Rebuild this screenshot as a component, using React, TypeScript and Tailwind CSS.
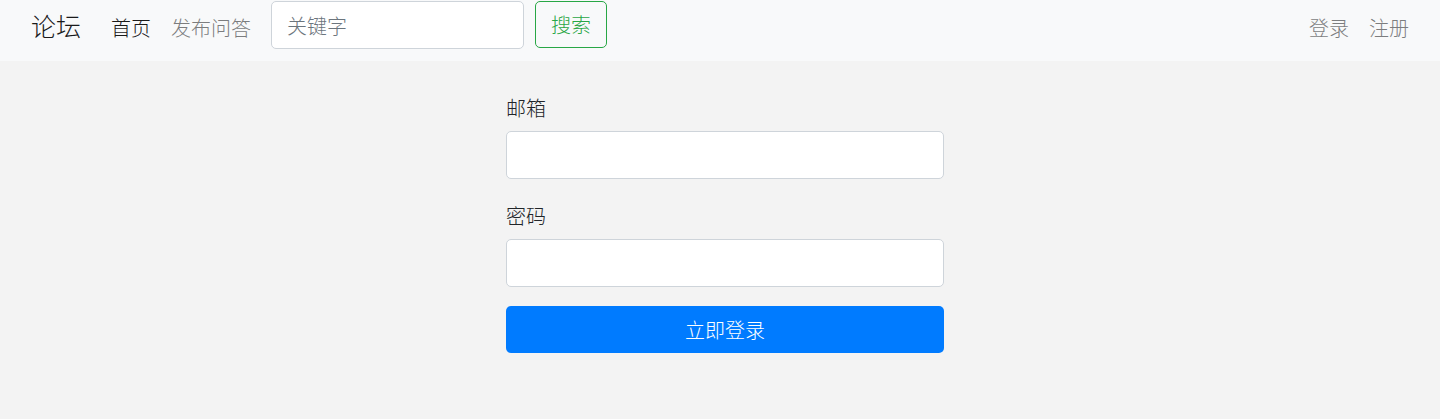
import React, { useState } from 'react';

const font = "font-['Noto_Sans_CJK_SC','Noto_Sans',sans-serif] font-light";

function NavBar() {
  const [keyword, setKeyword] = useState('');

  return (
    <nav className="flex items-start h-[61px] bg-[#f8f9fa] pl-[31px] pr-[21px]">
      <a href="#" className="mt-[13px] mr-[20px] text-[25px] leading-[25px] text-[#1a1a1a]">
        论坛
      </a>
      <a href="#" className="mt-[18px] px-[10px] text-[20px] leading-[20px] text-[#1a1a1a]">
        首页
      </a>
      <a href="#" className="mt-[18px] px-[10px] text-[20px] leading-[20px] text-[#7c7d7e]">
        发布问答
      </a>
      <form className="flex items-start" onSubmit={(e) => e.preventDefault()}>
        <input
          type="text"
          value={keyword}
          onChange={(e) => setKeyword(e.target.value)}
          placeholder="关键字"
          className="mt-[1px] ml-[10px] h-[48px] w-[253px] rounded-[5px] border border-[#ced4da] bg-white px-[15px] text-[20px] text-[#495057] placeholder:text-[#6c757d] outline-none"
        />
        <button
          type="submit"
          className="mt-[1px] ml-[11px] h-[47px] w-[72px] rounded-[5px] border border-[#28a745] text-[20px] leading-[20px] text-[#28a745]"
        >
          搜索
        </button>
      </form>
      <div className="ml-auto flex">
        <a href="#" className="mt-[18px] px-[10px] text-[20px] leading-[20px] text-[#7c7d7e]">
          登录
        </a>
        <a href="#" className="mt-[18px] px-[10px] text-[20px] leading-[20px] text-[#7c7d7e]">
          注册
        </a>
      </div>
    </nav>
  );
}

function LoginForm() {
  const [email, setEmail] = useState('');
  const [password, setPassword] = useState('');

  return (
    <div className="flex justify-center pl-[10px] pt-[32px]">
      <form className="flex w-[438px] flex-col" onSubmit={(e) => e.preventDefault()}>
        {/* Email */}
        <label htmlFor="email" className="mb-[8px] text-[20px] leading-[30px] text-[#212529]">
          邮箱
        </label>
        <input
          id="email"
          type="email"
          value={email}
          onChange={(e) => setEmail(e.target.value)}
          className="mb-[22px] h-[48px] w-full rounded-[5px] border border-[#ced4da] bg-white px-[15px] text-[20px] outline-none"
        />

        {/* Password */}
        <label htmlFor="password" className="mb-[8px] text-[20px] leading-[30px] text-[#212529]">
          密码
        </label>
        <input
          id="password"
          type="password"
          value={password}
          onChange={(e) => setPassword(e.target.value)}
          className="mb-[19px] h-[48px] w-full rounded-[5px] border border-[#ced4da] bg-white px-[15px] text-[20px] outline-none"
        />

        <button
          type="submit"
          className="h-[47px] w-full rounded-[5px] bg-[#007bff] text-[20px] leading-[20px] text-white"
        >
          立即登录
        </button>
      </form>
    </div>
  );
}

export default function App() {
  return (
    <div className={`min-h-[419px] bg-[#f3f3f3] ${font}`}>
      <NavBar />
      <LoginForm />
    </div>
  );
}
